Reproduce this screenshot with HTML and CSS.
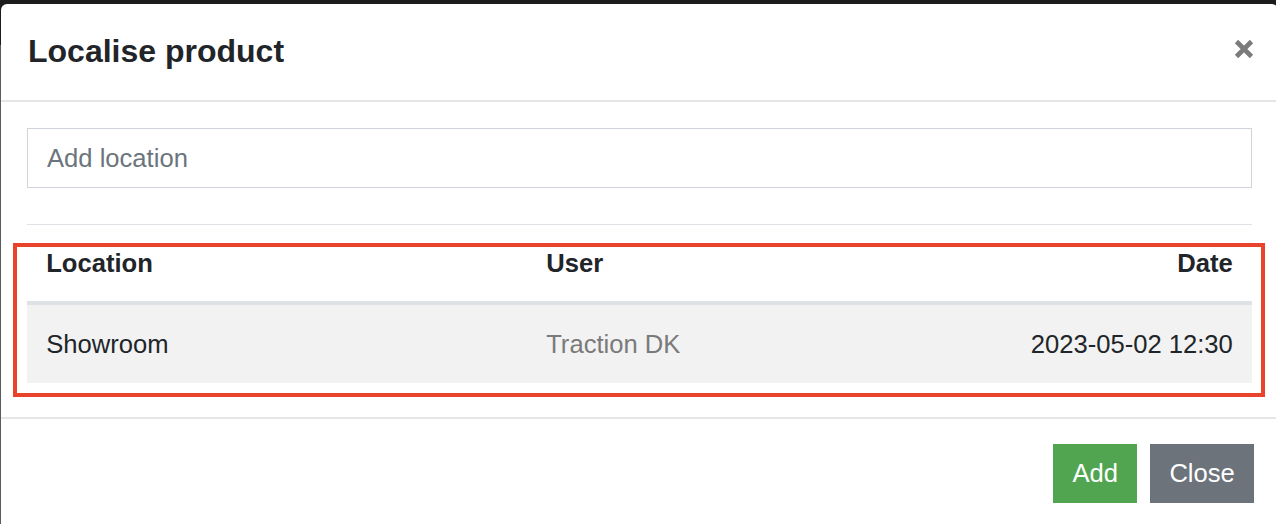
FILE: index.html
```html
<!DOCTYPE html>
<html lang="en">
<head>
    <meta charset="UTF-8">
    <title>Localise product</title>
    <link rel="stylesheet" href="styles.css">
</head>
<body>
<div class="modal">
    <div class="modal-header">
        <h5 class="modal-title">Localise product</h5>
        <button class="close" type="button">
            <svg width="20" height="20" viewBox="0 0 20 20">
                <path d="M2.5 2.5 L17.5 17.5 M17.5 2.5 L2.5 17.5" stroke="#7b7b7b" stroke-width="4.6" fill="none"/>
            </svg>
        </button>
    </div>
    <div class="modal-body">
        <input class="form-control" type="text" placeholder="Add location">
        <table class="table">
            <colgroup>
                <col class="col-location">
                <col>
                <col class="col-date">
            </colgroup>
            <thead>
                <tr>
                    <th>Location</th>
                    <th>User</th>
                    <th class="right">Date</th>
                </tr>
            </thead>
            <tbody>
                <tr>
                    <td>Showroom</td>
                    <td class="muted">Traction DK</td>
                    <td class="right">2023-05-02 12:30</td>
                </tr>
            </tbody>
        </table>
    </div>
    <div class="modal-footer">
        <button class="btn btn-success" type="button">Add</button>
        <button class="btn btn-secondary" type="button">Close</button>
    </div>
    <div class="highlight"></div>
</div>
</body>
</html>
```

FILE: styles.css
```css
* {
    margin: 0;
    padding: 0;
    box-sizing: border-box;
}

html, body {
    height: 100%;
    overflow: hidden;
}

body {
    background: linear-gradient(#1c1c1c 0, #1c1c1c 45px, #5c5c5c 45px);
    font-family: "Liberation Sans", Arial, Helvetica, sans-serif;
    font-size: 25.6px;
    color: #212529;
}

.modal {
    position: relative;
    width: 1277px;
    height: 520px;
    margin: 4px 0 0 1px;
    background-color: #fff;
    border-radius: 6px 6px 0 0;
}

.modal-header {
    display: flex;
    align-items: center;
    justify-content: space-between;
    padding: 23px 26px 24px 27px;
    border-bottom: 2px solid #e6e6e6;
}

.modal-title {
    font-size: 32px;
    font-weight: bold;
    line-height: 49px;
}

.close {
    display: flex;
    border: 0;
    background: none;
    margin-right: -2px;
    margin-top: -5px;
}

.modal-body {
    padding: 26px 26px 34px 26px;
}

.form-control {
    display: block;
    width: 100%;
    height: 60px;
    padding: 0 19px;
    border: 1px solid #ced4da;
    font-family: inherit;
    font-size: 25.6px;
    color: #495057;
    outline: none;
}

.form-control::placeholder {
    color: #6c757d;
}

.table {
    width: 100%;
    margin-top: 36px;
    border-collapse: collapse;
    table-layout: fixed;
}

.col-location {
    width: 500px;
}

.col-date {
    width: 300px;
}

.table th,
.table td {
    padding: 19px 19.2px;
    line-height: 38.4px;
    text-align: left;
    white-space: nowrap;
}

.table th {
    font-weight: bold;
    border-top: 1px solid #dee2e6;
    border-bottom: 4px solid #dee2e6;
}

.table td {
    padding-top: 20px;
    background-color: #f2f2f2;
}

.table .right {
    text-align: right;
}

.table .muted {
    color: #7a7a7a;
}

.modal-footer {
    display: flex;
    justify-content: flex-end;
    gap: 13px;
    padding: 25px 24px 0 0;
    border-top: 2px solid #e6e6e6;
}

.btn {
    height: 59px;
    padding: 0 19.2px;
    border: 0;
    font-family: inherit;
    font-size: 25.6px;
    color: #fff;
    cursor: pointer;
}

.btn-success {
    background-color: #51a551;
}

.btn-secondary {
    background-color: #6c737b;
}

/* annotation box drawn over the table */
.highlight {
    position: absolute;
    left: 12px;
    top: 239px;
    width: 1252px;
    height: 154px;
    border: 4px solid #e9442b;
}
```
